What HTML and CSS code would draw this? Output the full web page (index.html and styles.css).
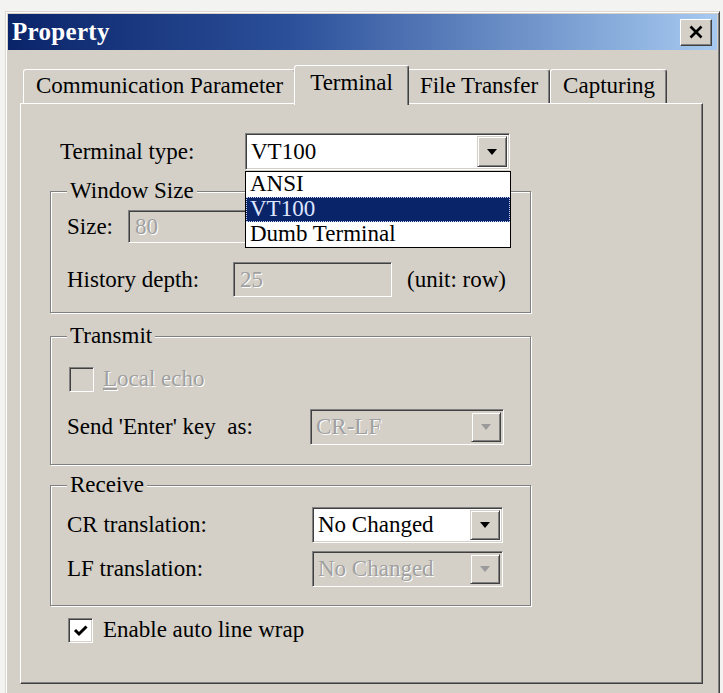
FILE: index.html
```html
<!DOCTYPE html>
<html lang="en">
<head>
<meta charset="utf-8">
<title>Property</title>
<link rel="stylesheet" href="styles.css">
</head>
<body>
<div class="desk">
  <div class="window">
    <div class="titlebar">
      <span class="title">Property</span>
      <button class="close" aria-label="Close">
        <svg width="16" height="14" viewBox="0 0 16 14"><path d="M2.5 1.5 L13.5 12.5 M13.5 1.5 L2.5 12.5" stroke="#000" stroke-width="2.6" fill="none"/></svg>
      </button>
    </div>
    <div class="dialog-body">
      <div class="tabs">
        <div class="tab tab-comm">Communication Parameter</div>
        <div class="tab active">Terminal</div>
        <div class="tab">File Transfer</div>
        <div class="tab">Capturing</div>
      </div>
      <div class="panel">
        <div class="row term-row">
          <span class="term-label">Terminal type:</span>
          <div class="combo term-combo">
            <span class="combo-value">VT100</span>
            <span class="combo-btn"><svg width="10" height="6" viewBox="0 0 10 6"><path d="M0 0 H10 L5 6 Z" fill="#000"/></svg></span>
            <ul class="droplist">
              <li>ANSI</li>
              <li class="selected">VT100</li>
              <li>Dumb Terminal</li>
            </ul>
          </div>
        </div>

        <fieldset class="group group-size">
          <legend>Window Size</legend>
          <div class="row size-row">
            <span class="lbl lbl-size">Size:</span>
            <span class="field disabled size-field">80</span>
          </div>
          <div class="row hist-row">
            <span class="lbl lbl-hist">History depth:</span>
            <span class="field disabled hist-field">25</span>
            <span class="unit">(unit: row)</span>
          </div>
        </fieldset>

        <fieldset class="group group-tx">
          <legend>Transmit</legend>
          <div class="row echo-row">
            <span class="check disabled"></span>
            <span class="check-label disabled-text"><u>L</u>ocal echo</span>
          </div>
          <div class="row send-row">
            <span class="lbl lbl-send">Send 'Enter' key&nbsp; as:</span>
            <div class="combo disabled send-combo">
              <span class="combo-value">CR-LF</span>
              <span class="combo-btn"><svg width="10" height="6" viewBox="0 0 10 6"><path d="M0 0 H10 L5 6 Z" fill="#9a9a9a"/></svg></span>
            </div>
          </div>
        </fieldset>

        <fieldset class="group group-rx">
          <legend>Receive</legend>
          <div class="row rx-row">
            <span class="lbl lbl-rx">CR translation:</span>
            <div class="combo rx-combo">
              <span class="combo-value">No Changed</span>
              <span class="combo-btn"><svg width="10" height="6" viewBox="0 0 10 6"><path d="M0 0 H10 L5 6 Z" fill="#000"/></svg></span>
            </div>
          </div>
          <div class="row rx-row lf-row">
            <span class="lbl lbl-rx">LF translation:</span>
            <div class="combo disabled rx-combo">
              <span class="combo-value">No Changed</span>
              <span class="combo-btn"><svg width="10" height="6" viewBox="0 0 10 6"><path d="M0 0 H10 L5 6 Z" fill="#9a9a9a"/></svg></span>
            </div>
          </div>
        </fieldset>

        <div class="row wrap-row">
          <span class="check checked">
            <svg width="17" height="15" viewBox="0 0 17 15"><path d="M3 7 L7 11 L14.5 3.5" stroke="#000" stroke-width="3" fill="none"/></svg>
          </span>
          <span class="check-label">Enable auto line wrap</span>
        </div>
      </div>
    </div>
  </div>
</div>
</body>
</html>
```

FILE: styles.css
```css
* { box-sizing: border-box; }

html, body {
  margin: 0;
  padding: 0;
}

body {
  width: 723px;
  height: 693px;
  overflow: hidden;
  background: #f3f3f1;
  font-family: "Liberation Serif", "Times New Roman", serif;
  font-size: 23px;
  color: #000;
}

.desk {
  padding: 11px 0 0 5px;
}

/* classic raised window frame */
.window {
  width: 715px;
  height: 700px;
  background: #d4d0c8;
  border: 1px solid;
  border-color: #dcd9d2 #404040 #404040 #dcd9d2;
  box-shadow: inset 1px 1px #fff, inset -1px -1px #808080;
  padding: 2px;
}

.titlebar {
  height: 36px;
  display: flex;
  align-items: center;
  justify-content: space-between;
  padding: 0 5px 0 4px;
  background: linear-gradient(to right, #0a246a 0%, #2c509a 40%, #a6caf0 100%);
}

.title {
  color: #fff;
  font-weight: bold;
  font-size: 25px;
  letter-spacing: 0.3px;
}

.close {
  width: 32px;
  height: 27px;
  padding: 0;
  margin: 0;
  display: flex;
  align-items: center;
  justify-content: center;
  background: #d4d0c8;
  border: 1px solid;
  border-color: #fff #404040 #404040 #fff;
  box-shadow: inset -1px -1px #808080;
}

.dialog-body {
  padding: 15px 14px 0 12px;
}

/* tab strip */
.tabs {
  display: flex;
  align-items: flex-end;
  height: 38px;
  padding-left: 3px;
}

.tab {
  height: 34px;
  padding: 0 11px 2px 12px;
  display: flex;
  align-items: center;
  background: #d4d0c8;
  border-top: 1px solid #fff;
  border-left: 1px solid #fff;
  border-right: 1px solid #404040;
  box-shadow: inset -1px 0 #808080;
  border-radius: 3px 3px 0 0;
  white-space: nowrap;
}

.tab.active {
  position: relative;
  z-index: 1;
  height: 40px;
  margin: 0 -2px -2px;
  padding: 0 15px 6px 15px;
}

.tab-comm {
  padding-right: 12px;
}

.panel {
  position: relative;
  height: 581px;
  border: 1px solid;
  border-color: #fff #404040 #404040 #fff;
  box-shadow: inset -1px -1px #808080;
  padding: 29px 0 0 0;
}

.row {
  display: flex;
  align-items: center;
}

.term-row {
  padding-left: 39px;
  height: 37px;
}

.term-label {
  width: 185px;
}

/* sunken edit / combo fields */
.field,
.combo {
  position: relative;
  display: flex;
  align-items: center;
  background: #fff;
  border: 1px solid;
  border-color: #808080 #fff #fff #808080;
  box-shadow: inset 1px 1px #404040, inset -1px -1px #d4d0c8;
  white-space: nowrap;
}

.field.disabled,
.combo.disabled {
  background: #d4d0c8;
  color: #a0a0a0;
  text-shadow: 1px 1px 0 #fff;
}

.combo-value {
  flex: 1;
  padding-left: 5px;
}

.combo-btn {
  width: 30px;
  align-self: stretch;
  margin: 2px 2px 2px 0;
  display: flex;
  align-items: center;
  justify-content: center;
  background: #d4d0c8;
  border: 1px solid;
  border-color: #d4d0c8 #404040 #404040 #d4d0c8;
  box-shadow: inset 1px 1px #fff, inset -1px -1px #808080;
}

.term-combo {
  width: 265px;
  height: 37px;
}

.droplist {
  position: absolute;
  z-index: 5;
  top: 37px;
  left: -1px;
  width: 266px;
  margin: 0;
  padding: 0;
  list-style: none;
  background: #fff;
  border: 1px solid #000;
  color: #000;
}

.droplist li {
  height: 25px;
  line-height: 24px;
  padding-left: 4px;
}

.droplist li.selected {
  background: #0a246a;
  color: #dfe6ff;
  outline: 1px dotted #c8d0ff;
  outline-offset: -1px;
}

/* etched group boxes */
.group {
  margin: 0 0 0 29px;
  width: 481px;
  border: 1px solid #808080;
  box-shadow: 1px 1px 0 #fff, inset 1px 1px 0 #fff;
  padding: 0 16px;
  min-width: 0;
}

.group legend {
  padding: 0 3px;
  line-height: 26px;
  background: #d4d0c8;
}

.group-size {
  margin-top: 8px;
  padding-top: 6px;
  padding-bottom: 15px;
}

.size-row {
  height: 33px;
}

.lbl-size {
  width: 61px;
}

.size-field {
  width: 165px;
  height: 33px;
  padding-left: 6px;
}

.hist-row {
  height: 35px;
  margin-top: 19px;
}

.lbl-hist {
  width: 166px;
}

.hist-field {
  width: 159px;
  height: 35px;
  padding-left: 6px;
}

.unit {
  margin-left: 15px;
}

.group-tx {
  margin-top: 10px;
  padding-top: 17px;
  padding-bottom: 19px;
}

.echo-row {
  height: 26px;
  padding-left: 2px;
}

/* check boxes */
.check {
  width: 25px;
  height: 25px;
  flex: none;
  display: flex;
  align-items: center;
  justify-content: center;
  background: #fff;
  border: 1px solid;
  border-color: #808080 #fff #fff #808080;
  box-shadow: inset 1px 1px #404040, inset -1px -1px #d4d0c8;
}

.check.disabled {
  background: #d4d0c8;
}

.check-label {
  margin-left: 9px;
}

.disabled-text {
  color: #a0a0a0;
  text-shadow: 1px 1px 0 #fff;
}

.send-row {
  height: 36px;
  margin-top: 17px;
}

.lbl-send {
  width: 243px;
  white-space: nowrap;
}

.send-combo {
  width: 194px;
  height: 36px;
}

.group-rx {
  margin-top: 7px;
  padding-top: 9px;
  padding-bottom: 18px;
}

.rx-row {
  height: 36px;
}

.lf-row {
  margin-top: 8px;
}

.lbl-rx {
  width: 245px;
}

.rx-combo {
  width: 191px;
  height: 36px;
}

.wrap-row {
  margin-top: 11px;
  padding-left: 47px;
}

.wrap-row .check-label {
  margin-left: 10px;
}
```
